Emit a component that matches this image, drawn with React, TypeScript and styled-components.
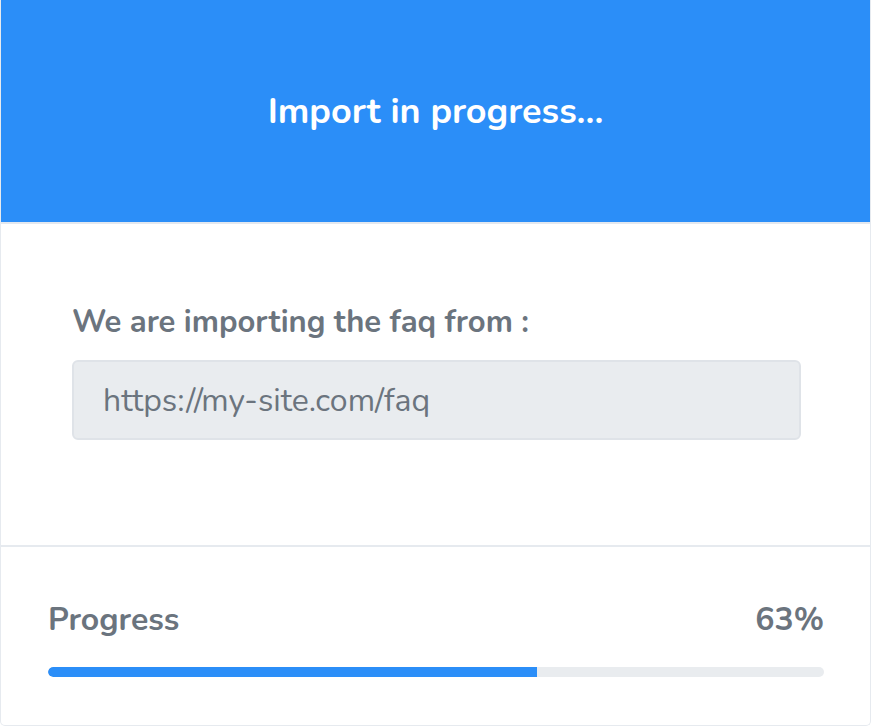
import { FC } from 'react';
import styled, { createGlobalStyle } from 'styled-components';

const GlobalStyle = createGlobalStyle`
  html, body {
    margin: 0;
    padding: 0;
    background: #ffffff;
  }
  body {
    font-family: 'Nunito', 'Lato', 'Noto Sans', sans-serif;
  }
`;

const PROGRESS = 63;

const App: FC = () => (
  <>
    <GlobalStyle />
    <Card>
      <Header>
        <Title>Import in progress...</Title>
      </Header>
      <Body>
        <Label>We are importing the faq from :</Label>
        <UrlBox>https://my-site.com/faq</UrlBox>
      </Body>
      <Footer>
        <ProgressRow>
          <ProgressLabel>Progress</ProgressLabel>
          <ProgressLabel>{PROGRESS}%</ProgressLabel>
        </ProgressRow>
        <Track>
          <Fill style={{ width: `${PROGRESS}%` }} />
        </Track>
      </Footer>
    </Card>
  </>
);

const Card = styled.div`
  width: 871px;
  height: 726px;
  box-sizing: border-box;
  display: flex;
  flex-direction: column;
  border: 1px solid #e6eaef;
  border-top: 0;
  border-radius: 0 0 5px 5px;
  overflow: hidden;
`;

const Header = styled.div`
  height: 222px;
  flex-shrink: 0;
  display: flex;
  align-items: center;
  justify-content: center;
  background: #2b8ef8;
  border-bottom: 2px solid #e3e8ef;
`;

const Title = styled.h1`
  margin: 0;
  color: #ffffff;
  font-size: 36px;
  font-weight: 700;
`;

const Body = styled.div`
  padding: 81px 69px 105px 71px;
  border-bottom: 2px solid #e6eaef;
`;

const Label = styled.div`
  color: #6b747e;
  font-size: 31px;
  font-weight: 700;
  line-height: 34px;
  margin-bottom: 21px;
`;

const UrlBox = styled.div`
  height: 80px;
  box-sizing: border-box;
  display: flex;
  align-items: center;
  padding: 0 29px;
  background: #e9ecef;
  border: 2px solid #dfe3e8;
  border-radius: 6px;
  color: #6b747e;
  font-size: 32px;
  font-weight: 400;
`;

const Footer = styled.div`
  flex: 1;
  padding: 55px 46px 0 47px;
`;

const ProgressRow = styled.div`
  display: flex;
  justify-content: space-between;
  align-items: center;
  margin-bottom: 29px;
`;

const ProgressLabel = styled.span`
  color: #6b747e;
  font-size: 32px;
  font-weight: 700;
  line-height: 36px;
`;

const Track = styled.div`
  height: 10px;
  border-radius: 5px;
  background: #e9ecef;
  overflow: hidden;
`;

const Fill = styled.div`
  height: 100%;
  border-radius: 5px 0 0 5px;
  background: #2b8ef8;
`;

export default App;
